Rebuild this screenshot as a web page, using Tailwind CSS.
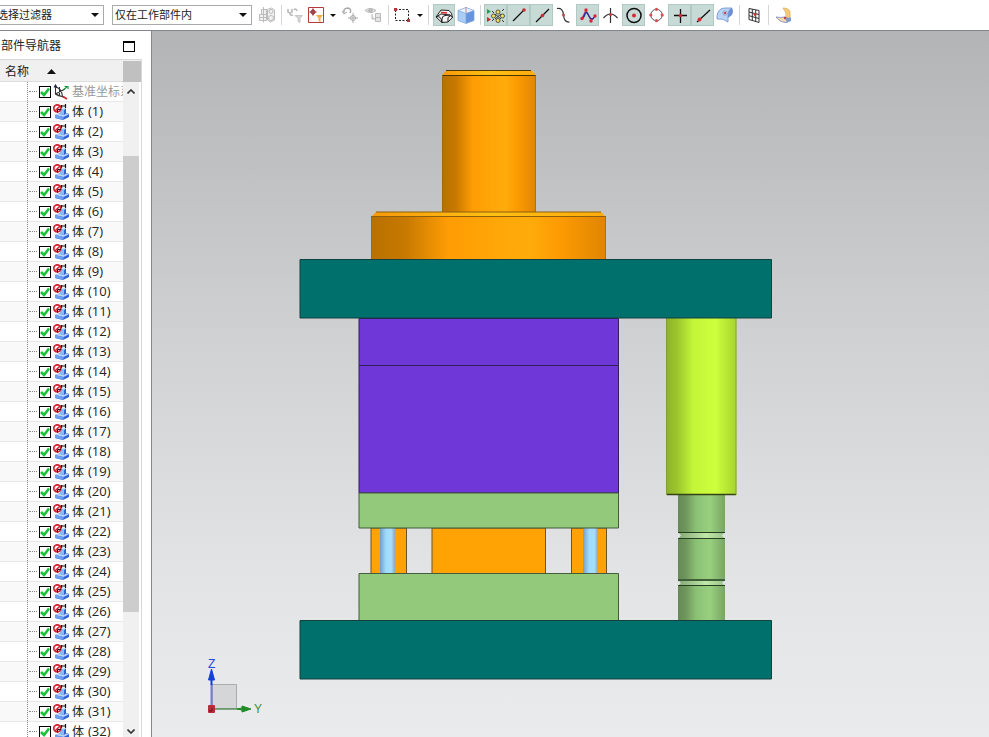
<!DOCTYPE html>
<html lang="zh-CN">
<head>
<meta charset="utf-8">
<title>部件导航器</title>
<script src="https://cdn.jsdelivr.net/npm/@tailwindcss/browser@4"></script>
</head>
<body class="flex h-screen flex-col overflow-hidden bg-white font-['Open_Sans','Noto_Sans_CJK_SC',sans-serif] text-[12px] text-[#222]">

<header class="flex h-[31px] shrink-0 items-center overflow-hidden border-b border-[#83878b]">
  <label class="relative block h-5 w-[104px] shrink-0">
    <select aria-label="选择过滤器" class="h-5 w-full appearance-none border border-l-0 border-[#aaa] bg-white text-[11px] leading-[18px] -indent-[3px]"><option>选择过滤器</option></select>
    <svg class="pointer-events-none absolute right-[5px] top-2 h-1 w-2" viewBox="0 0 8 4"><path d="M0 0h8L4 4z" fill="#111"/></svg>
  </label>
  <label class="relative ml-2 mr-1 block h-5 w-[140px] shrink-0">
    <select aria-label="选择范围" class="h-5 w-full appearance-none border border-[#aaa] bg-white px-0.5 text-[11px] leading-[18px]"><option>仅在工作部件内</option></select>
    <svg class="pointer-events-none absolute right-[5px] top-2 h-1 w-2" viewBox="0 0 8 4"><path d="M0 0h8L4 4z" fill="#111"/></svg>
  </label>
  <div class="flex h-[22px] shrink-0 items-center" role="toolbar" aria-label="选择工具">
    <button aria-label="装配约束" class="flex h-full w-[22px] items-center justify-center"><svg class="size-5" viewBox="0 0 20 20" fill="#f1f1f1" stroke="#bcbcbc"><path d="M4.500 4.500h5v5h-5zM2.500 9.500h7v6h-7zM6.500 2v15.500M2.500 12.500h8"/><path d="M10.500 4.500l4-1.500 3 2v10l-4 2-3-2z"/><circle cx="14" cy="6.500" r="2"/><circle cx="14" cy="13" r="2.500"/></svg></button>
    <i class="mx-[3px] h-5 w-px bg-[#d5d5d5]"></i>
    <button aria-label="清除过滤器" class="flex h-full w-5 items-center justify-center"><svg class="size-5" viewBox="0 0 20 20" fill="none" stroke="#bdbdbd"><path d="M3 4v3l2 1 2-1V4M5 8q0 3 3 2M9 5q2-2 3 1" stroke-width="1.700"/><path d="M10 10.500h7.500l-2.500 3v4l-2-1v-3z" fill="#d5d5d5" stroke="#c8c8c8"/></svg></button>
    <button aria-label="选择过滤" class="flex h-full w-[22px] items-center justify-center"><svg class="size-5" viewBox="0 0 20 20" fill="none"><path d="M2.500 2.500h15v15h-15z" fill="#fffafa" stroke="#b33b3b"/><path d="M7 3.500v7M3.500 7h7" stroke="#8c1f25" stroke-width="1.200"/><circle cx="7" cy="7" r="2" stroke="#8c1f25"/><path d="M10 10h7l-2.500 3v4l-2-1v-3z" fill="#f2ae48"/></svg></button>
    <button aria-label="更多过滤" class="flex h-full w-3 items-center justify-center"><svg class="h-[3px] w-1.5" viewBox="0 0 6 3"><path d="M0 0h6L3 3z" fill="#111"/></svg></button>
    <button aria-label="重置" class="flex h-full w-[22px] items-center justify-center"><svg class="size-5" viewBox="0 0 20 20" fill="none" stroke="#aaa"><path d="M4 8q-1-5 4-5 4 1 2 5" stroke-width="1.500"/><path d="M2 6l2 3 3-2M13 8v10M8 13h10"/><circle cx="13" cy="13" r="2.500"/></svg></button>
    <button aria-label="显示层级" class="flex h-full w-6 items-center justify-center"><svg class="size-5" viewBox="0 0 20 20" fill="#e5e5e5" stroke="#b8b8b8"><path d="M2 5.500q5-4 11 0-5 4-11 0z"/><circle cx="7.500" cy="5.500" r="1.800" fill="#bbb"/><path d="M12.500 8.500h5v8h-5zM12.500 12.500h5M9 9v5h3"/></svg></button>
    <i class="mx-[3px] h-5 w-px bg-[#d5d5d5]"></i>
    <button aria-label="矩形选择" class="flex h-full w-5 items-center justify-center"><svg class="size-5" viewBox="0 0 20 20" fill="none"><path d="M3.500 4.500h13v11h-13z" stroke="#222" stroke-dasharray="2 1.500"/><path d="M2 3h3v3H2zM15 14h3v3h-3z" fill="#b2393b"/></svg></button>
    <button aria-label="更多选择方式" class="flex h-full w-4 items-center justify-center"><svg class="h-[3px] w-1.5" viewBox="0 0 6 3"><path d="M0 0h6L3 3z" fill="#111"/></svg></button>
    <i class="mr-1 h-5 w-px bg-[#d5d5d5]"></i>
    <button aria-label="面选择" aria-pressed="true" class="flex h-full w-[22px] shrink-0 items-center justify-center border border-[#b0c9c3] bg-[#c8dad5]"><svg class="size-5 shrink-0" viewBox="0 0 20 20" stroke="#222" stroke-linejoin="round"><path d="M2 12l5-7 8 .5q3 2 3.500 7L14 17l-6 .5z" fill="#f4f4f4"/><path d="M2 12q5-2 6 5.500M8 17.500V14q0-3 3-3.500l5-.5q2 1 2.500 3M2 12l5-3 9 1M14 17v-4.500l3-2" fill="none"/><path d="M7 7.500l6 .5" stroke="#d22" stroke-width="1.500"/></svg></button>
    <button aria-label="实体选择" class="flex h-full w-[22px] items-center justify-center"><svg class="size-5" viewBox="0 0 20 20"><path d="M2 5.500l8-3 8 3-8 3z" fill="#e5f2ff"/><path d="M2 5.500l8 3v10l-8-3z" fill="#a9cdf5"/><path d="M10 8.500l8-3v10l-8 3z" fill="#6694df"/><path d="M2 5.500l8-3 8 3v10l-8 3-8-3zM2 5.500l8 3 8-3M10 8.500v10" fill="none" stroke="#7ba1d9" stroke-width=".7"/><path d="M10 2v6" stroke="#c96b7a" stroke-width=".8"/></svg></button>
    <i class="mx-[3px] h-5 w-px bg-[#d5d5d5]"></i>
    <button aria-label="启用捕捉点" aria-pressed="true" class="flex h-full w-[23px] items-center justify-center border border-[#b0c9c3] bg-[#c8dad5]"><svg class="size-5" viewBox="0 0 20 20"><path d="M1 4l4 2.500L1 9z" fill="#20a050"/><path d="M1 12l4 2.500L1 17z" fill="#d62333"/><path d="M6 6l2 2M16 15l2 2M16 6l2-2M8 14l-2 2M9 9l6 5M15 9l-6 5" stroke="#333"/><g fill="#f4e657" stroke="#333" stroke-width=".8"><circle cx="7.500" cy="11" r="2"/><circle cx="16.500" cy="11" r="2"/><circle cx="12" cy="7" r="2"/><circle cx="12" cy="15.500" r="2"/></g></svg></button>
    <button aria-label="端点" aria-pressed="true" class="flex h-full w-[23px] items-center justify-center border border-[#b0c9c3] bg-[#c8dad5]"><svg class="size-5" viewBox="0 0 20 20"><path d="M4 16L15 5" stroke="#111" stroke-width="1.300"/><circle cx="15" cy="5" r="1.800" fill="#c82f36"/></svg></button>
    <button aria-label="中点" aria-pressed="true" class="flex h-full w-[23px] items-center justify-center border border-[#b0c9c3] bg-[#c8dad5]"><svg class="size-5" viewBox="0 0 20 20"><path d="M4 17L17 4" stroke="#111" stroke-width="1.300"/><circle cx="10.500" cy="10.500" r="1.800" fill="#c82f36"/></svg></button>
    <button aria-label="控制点" class="flex h-full w-[23px] items-center justify-center"><svg class="size-5" viewBox="0 0 20 20" fill="none"><path d="M2 3.500q6-1 6.500 6.500t6 7" stroke="#333" stroke-width="1.200"/><circle cx="8.500" cy="10" r="1.500" fill="#b64c50"/></svg></button>
    <button aria-label="极点" aria-pressed="true" class="flex h-full w-[23px] items-center justify-center border border-[#b0c9c3] bg-[#c8dad5]"><svg class="size-5" viewBox="0 0 20 20" fill="none"><path d="M4 13L8 5l5 11 4-5" stroke="#c82f46"/><path d="M3 14q3-1 4-5t4 2 6 0" stroke="#282b99" stroke-width="1.400"/><g fill="#d8273b"><circle cx="4" cy="13.500" r="1.700"/><circle cx="8" cy="5" r="1.700"/><circle cx="13" cy="16" r="1.700"/><circle cx="17" cy="11" r="1.700"/></g></svg></button>
    <button aria-label="交点" class="flex h-full w-[23px] items-center justify-center"><svg class="size-5" viewBox="0 0 20 20" fill="none"><path d="M2.500 13q7-8 14 0M9.500 3v15" stroke="#333" stroke-width="1.200"/><circle cx="9.500" cy="9.500" r="1.500" fill="#c23a42"/></svg></button>
    <button aria-label="圆弧中心" aria-pressed="true" class="flex h-full w-[23px] items-center justify-center border border-[#b0c9c3] bg-[#c8dad5]"><svg class="size-5" viewBox="0 0 20 20" fill="none"><circle cx="10" cy="10.500" r="7" stroke="#111" stroke-width="1.500"/><circle cx="10" cy="10.500" r="2" fill="#d12c37"/></svg></button>
    <button aria-label="象限点" class="flex h-full w-[23px] items-center justify-center"><svg class="size-5" viewBox="0 0 20 20" fill="none"><circle cx="9.500" cy="10" r="5.700" stroke="#555"/><g fill="#d65058"><circle cx="9.500" cy="4.300" r="1.600"/><circle cx="9.500" cy="15.700" r="1.600"/><circle cx="3.800" cy="10" r="1.600"/><circle cx="15.200" cy="10" r="1.600"/></g></svg></button>
    <button aria-label="现有点" aria-pressed="true" class="flex h-full w-[23px] items-center justify-center border border-[#b0c9c3] bg-[#c8dad5]"><svg class="size-5" viewBox="0 0 20 20"><path d="M10.500 4v14M4 10.500h13" stroke="#111" stroke-width="1.300"/><circle cx="10.500" cy="10.500" r="1.700" fill="#c82f36"/></svg></button>
    <button aria-label="曲线上的点" aria-pressed="true" class="flex h-full w-[23px] items-center justify-center border border-[#b0c9c3] bg-[#c8dad5]"><svg class="size-5" viewBox="0 0 20 20"><path d="M4 17L17 5" stroke="#111" stroke-width="1.300"/><circle cx="6.500" cy="14.500" r="1.900" fill="#c82f36"/></svg></button>
    <button aria-label="面上的点" class="flex h-full w-[22px] items-center justify-center"><svg class="size-5" viewBox="0 0 20 20"><path d="M2 11q1-8 8-8h7q-4 2-4 7v7q-5-4-11-3z" fill="#b8d3f6" stroke="#6c8fc9" stroke-width=".8"/><path d="M13 11q0-7 4-8 2 3 0 7l-4 3z" fill="#6e91d5"/><circle cx="10" cy="8" r="2.200" fill="#d9e8fb" stroke="#6683bd" stroke-width=".6"/><circle cx="10" cy="8" r="1.300" fill="#c54855"/></svg></button>
    <i class="mx-[3px] h-5 w-px bg-[#d5d5d5]"></i>
    <button aria-label="栅格点" class="flex h-full w-[22px] items-center justify-center"><svg class="size-5" viewBox="0 0 20 20" fill="none" stroke="#333"><path d="M5 3.500l10 2v12l-10-3zM8.300 4v11.500M11.700 5v11.500M5 7l10 2.500M5 10.700l10 2.800"/><circle cx="11" cy="9.500" r="1" fill="#c33" stroke="#c33"/></svg></button>
    <i class="mx-[3px] h-5 w-px bg-[#d5d5d5]"></i>
    <button aria-label="小平面顶点" class="flex h-full w-[26px] items-center justify-center"><svg class="size-5" viewBox="0 0 20 20"><path d="M8 3q6 0 7 4v8l-4-2q1-6-3-10z" fill="#f7cc79" stroke="#d3a250" stroke-width=".7"/><path d="M1 12q5 1 9 0l6 3-4 2.500q-7 0-11-5.500z" fill="#f3d9ad" stroke="#7988bd" stroke-width=".8"/><path d="M10 13l6-.5V16l-4 1.500z" fill="#839ad1"/><circle cx="10" cy="13" r="1.200" fill="#b94444"/></svg></button>
  </div>
</header>

<main class="flex min-h-0 flex-1">
  <aside class="flex w-[152px] shrink-0 flex-col border-r border-[#85898d]">
    <div class="flex h-7 shrink-0 items-center justify-between pl-px pr-4 pt-0.5">
      <h1 class="text-[12px]">部件导航器</h1>
      <button aria-label="最大化" class="h-[11px] w-3 border border-t-2 border-black"></button>
    </div>
    <div class="mr-[9px] flex min-h-0 flex-1 flex-col border-r border-t border-[#d8d8d8]">
      <div class="flex h-[22px] shrink-0 items-stretch bg-[#f0f0f0]">
        <button class="flex flex-1 items-center gap-[18px] border-b border-[#ddd] pl-[5px] pt-0.5">名称
          <svg class="h-[5px] w-[9px]" viewBox="0 0 9 5"><path d="M0 5h9L4.500 0z" fill="#111"/></svg>
        </button>
        <span class="mt-px w-[18px] bg-[#c0c0c0]"></span>
      </div>
      <div class="flex min-h-0 flex-1">
        <div class="min-w-0 flex-1 overflow-hidden">
          <ul id="tree">
            <li class="flex h-5 border-b border-[#e8e8e8]">
              <span class="ml-[27px] flex w-[10px] shrink-0 items-center border-l border-dotted border-[#888] pl-px"><i class="w-full border-t border-dotted border-[#888]"></i></span>
              <label class="flex items-center whitespace-nowrap text-[#999]">
                <input type="checkbox" checked class="peer ml-0.5 size-3 shrink-0 appearance-none border border-black bg-white">
                <svg class="pointer-events-none invisible -ml-3 size-3 shrink-0 peer-checked:visible" viewBox="0 0 12 12"><path d="M2 6l3 3 5-6.500" fill="none" stroke="#17c435" stroke-width="2.600"/></svg>
                <svg class="ml-0.5 mr-[3px] size-4 shrink-0" viewBox="0 0 16 16" fill="none" stroke="#333" stroke-width="1.100"><path d="M2.500 2v8l9 3.500M2.500 10L12 5M2.500 3q6 1 7 9.500M6.500 3v9.500M2.500 10q4 3 7 2"/><path d="M1 3.500L2.500 1 4 3.500" stroke="#222855"/><path d="M10 6l4-3M11.500 2.500H15v2.500" stroke="#159441"/><path d="M10 12.500l4 2.500" stroke="#cc292d" stroke-width="1.600"/></svg>
                <span>基准坐标系</span>
              </label>
            </li>
          </ul>
          <template id="body-row">
            <li class="flex h-5 border-b border-[#e8e8e8] odd:bg-white even:bg-[#f9f9f9]">
              <span class="ml-[27px] flex w-[10px] shrink-0 items-center border-l border-dotted border-[#888] pl-px"><i class="w-full border-t border-dotted border-[#888]"></i></span>
              <label class="flex items-center whitespace-nowrap">
                <input type="checkbox" checked class="peer ml-0.5 size-3 shrink-0 appearance-none border border-black bg-white">
                <svg class="pointer-events-none invisible -ml-3 size-3 shrink-0 peer-checked:visible" viewBox="0 0 12 12"><path d="M2 6l3 3 5-6.500" fill="none" stroke="#17c435" stroke-width="2.600"/></svg>
                <svg class="ml-0.5 mr-[3px] size-4 shrink-0" viewBox="0 0 16 16"><path d="M2 11l5-2V5l5-1 1 1v4l3 1v3l-6 3-8-2z" fill="#2f62d2"/><path d="M7 5l4 1v5l-4-1z" fill="#8db6f5"/><path d="M7 5l3-1.500 3 1L11 6z" fill="#c3dbff"/><path d="M2 11l4-2 1 1 4 1 2-1.500 3 .8-5.500 2.700z" fill="#b6d2ff"/><path d="M2 11l8.500 2v3L2 14z" fill="#6f9df0"/><path d="M8.500 1v3M12.500 0v4M7.500 2h5" stroke="#111" stroke-width="1.200" fill="none"/><circle cx="4.300" cy="4.300" r="3.500" fill="#fff" stroke="#d22530" stroke-width="1.700"/><path d="M2 7l5-5" stroke="#d22530" stroke-width="1.600"/><path d="M4.500 8.500V5.500H8" stroke="#222" fill="none"/></svg>
                <span>体<span class="body-number ml-1 text-[13px]"></span></span>
              </label>
            </li>
          </template>
        </div>
        <div class="mr-px flex w-[17px] shrink-0 flex-col border-r border-white bg-[#f0f0f0]">
          <button aria-label="向上滚动" class="flex h-[18px] shrink-0 items-center justify-center"><svg class="h-[5px] w-2" viewBox="0 0 8 5"><path d="M.5 4.500L4 1l3.500 3.500" fill="none" stroke="#333" stroke-width="1.600"/></svg></button>
          <div class="flex flex-1 flex-col">
            <span class="grow-[56]"></span><span class="grow-[455] bg-[#cdcdcd]"></span><span class="grow-[113]"></span>
          </div>
          <button aria-label="向下滚动" class="flex h-3 shrink-0 items-center justify-center"><svg class="h-[5px] w-2" viewBox="0 0 8 5"><path d="M.5.500L4 4 7.500.500" fill="none" stroke="#333" stroke-width="1.600"/></svg></button>
        </div>
      </div>
    </div>
  </aside>

  <section aria-label="图形窗口" class="min-w-0 flex-1 bg-linear-[180deg,#b3b4b5_0%,#cfd0d2_42%,#e2e4e6_78%,#e9ebed_100%]">
    <svg class="h-full w-full" viewBox="152 31 837 706" role="img" aria-label="模具装配正视图">
      <defs>
        <linearGradient id="orange"><stop offset="0" stop-color="#b87000"/><stop offset=".15" stop-color="#c87a00"/><stop offset=".33" stop-color="#ff9d04"/><stop offset=".67" stop-color="#ffac0b"/><stop offset=".8" stop-color="#fd9b03"/><stop offset="1" stop-color="#df8500"/></linearGradient>
        <linearGradient id="rim"><stop offset="0" stop-color="#f89a08"/><stop offset=".5" stop-color="#ffc014"/><stop offset="1" stop-color="#ffac0c"/></linearGradient>
        <linearGradient id="lime"><stop offset="0" stop-color="#8eb328"/><stop offset=".15" stop-color="#9bc42c"/><stop offset=".38" stop-color="#c3f538"/><stop offset=".7" stop-color="#ceff3d"/><stop offset="1" stop-color="#a5d32d"/></linearGradient>
        <linearGradient id="green"><stop offset="0" stop-color="#658b54"/><stop offset=".17" stop-color="#6f965d"/><stop offset=".38" stop-color="#8bc074"/><stop offset=".68" stop-color="#98d07f"/><stop offset="1" stop-color="#78a565"/></linearGradient>
        <linearGradient id="groove"><stop offset="0" stop-color="#86a877"/><stop offset=".6" stop-color="#bfe8a9"/><stop offset="1" stop-color="#9cc389"/></linearGradient>
        <linearGradient id="blue"><stop offset="0" stop-color="#779bc5"/><stop offset=".4" stop-color="#9edbfd"/><stop offset=".75" stop-color="#a6deff"/><stop offset="1" stop-color="#91a5b3"/></linearGradient>
      </defs>
      <path d="M442 75h94v137h-94z" fill="url(#orange)"/>
      <path d="M442 75l5-5h84l5 5z" fill="url(#rim)"/>
      <path d="M446 70.500h85M442 75.500h94" stroke="#4c370b"/>
      <path d="M442.500 75v137M535.500 75v137" stroke="#9b680c" stroke-opacity=".7"/>
      <path d="M371 217h235v43H371z" fill="url(#orange)"/>
      <path d="M371 217l5-5h225l5 5z" fill="url(#rim)"/>
      <path d="M376 212h225M371 216.500h235" stroke="#8c5e0d"/>
      <path d="M371.500 217v43M605.500 217v43" stroke="#9b680c" stroke-opacity=".7"/>
      <g>
        <path d="M359 318.500h259.500v47H359zM359 365.500h259.500v127.500H359z" fill="#6f37d8" stroke="#302057"/>
        <path d="M371 528h35.500v45.500H371zM432 528h113.500v45.500H432zM571.500 528h35v45.500h-35z" fill="#ffa305" stroke="#6a542a"/>
        <path d="M380 528h15v45h-15z" fill="url(#blue)"/>
        <path d="M583 528h15v45h-15z" fill="url(#blue)"/>
        <path d="M359 493h259.500v35H359zM359 573.500h259.500v47H359z" fill="#93c97a" stroke="#455b3d"/>
      </g>
      <path d="M678 495h47v125h-47z" fill="url(#green)"/>
      <path d="M677 533h49v5h-49zM677 581h49v4h-49z" fill="#dfe2e3"/>
      <path d="M679 533h45l-2 2.500 2 2.500h-45l2-2.500zM679 581h45l-2 2 2 2h-45l2-2z" fill="url(#groove)"/>
      <path d="M678 532.500h47M678 538.500h47M678 585.500h47" stroke="#24401f"/>
      <path d="M678 580h47" stroke="#3f5f38" stroke-width="2"/>
      <path d="M666 318h70.500v177H666z" fill="url(#lime)"/>
      <path d="M667 494.500h69" stroke="#344215" stroke-width="1.500"/>
      <path d="M666.500 318v177M736 318v177" stroke="#7a943a" stroke-opacity=".7"/>
      <path d="M300 259.500h471.500V318H300zM300 620.500h471.500V679H300z" fill="#00706d" stroke="#12403e"/>
      <g>
        <path d="M212.500 684.500h24v24h-24z" fill="#d4d6d7" stroke="#a9abad"/>
        <path d="M211.500 708V684" stroke="#777bd5" stroke-width="2"/>
        <path d="M211.500 685v-9" stroke="#143fd9" stroke-width="2"/>
        <path d="M208.500 680l3-11 3 11z" fill="#143fd9" stroke="#143fd9"/>
        <path d="M213 709h27" stroke="#5c925c" stroke-width="1.500"/>
        <path d="M237 709l5-1v-2l9 3-9 3v-2z" fill="#218b26" stroke="#218b26"/>
        <rect x="208" y="705" width="7" height="8" rx="1" fill="#b52d38"/>
        <path d="M209 711h3v-3" stroke="#69171d" fill="none"/>
        <text x="208" y="668" font-size="12" fill="#2446e0" font-family="Liberation Sans, sans-serif">Z</text>
        <text x="254" y="713" font-size="12" fill="#379044" font-family="Liberation Sans, sans-serif">Y</text>
      </g>
    </svg>
  </section>
</main>

<script>
  const tree = document.getElementById('tree');
  const row = document.getElementById('body-row');
  for (let n = 1; n <= 32; n++) {
    const item = row.content.cloneNode(true);
    item.querySelector('.body-number').textContent = `(${n})`;
    tree.append(item);
  }
</script>
</body>
</html>
